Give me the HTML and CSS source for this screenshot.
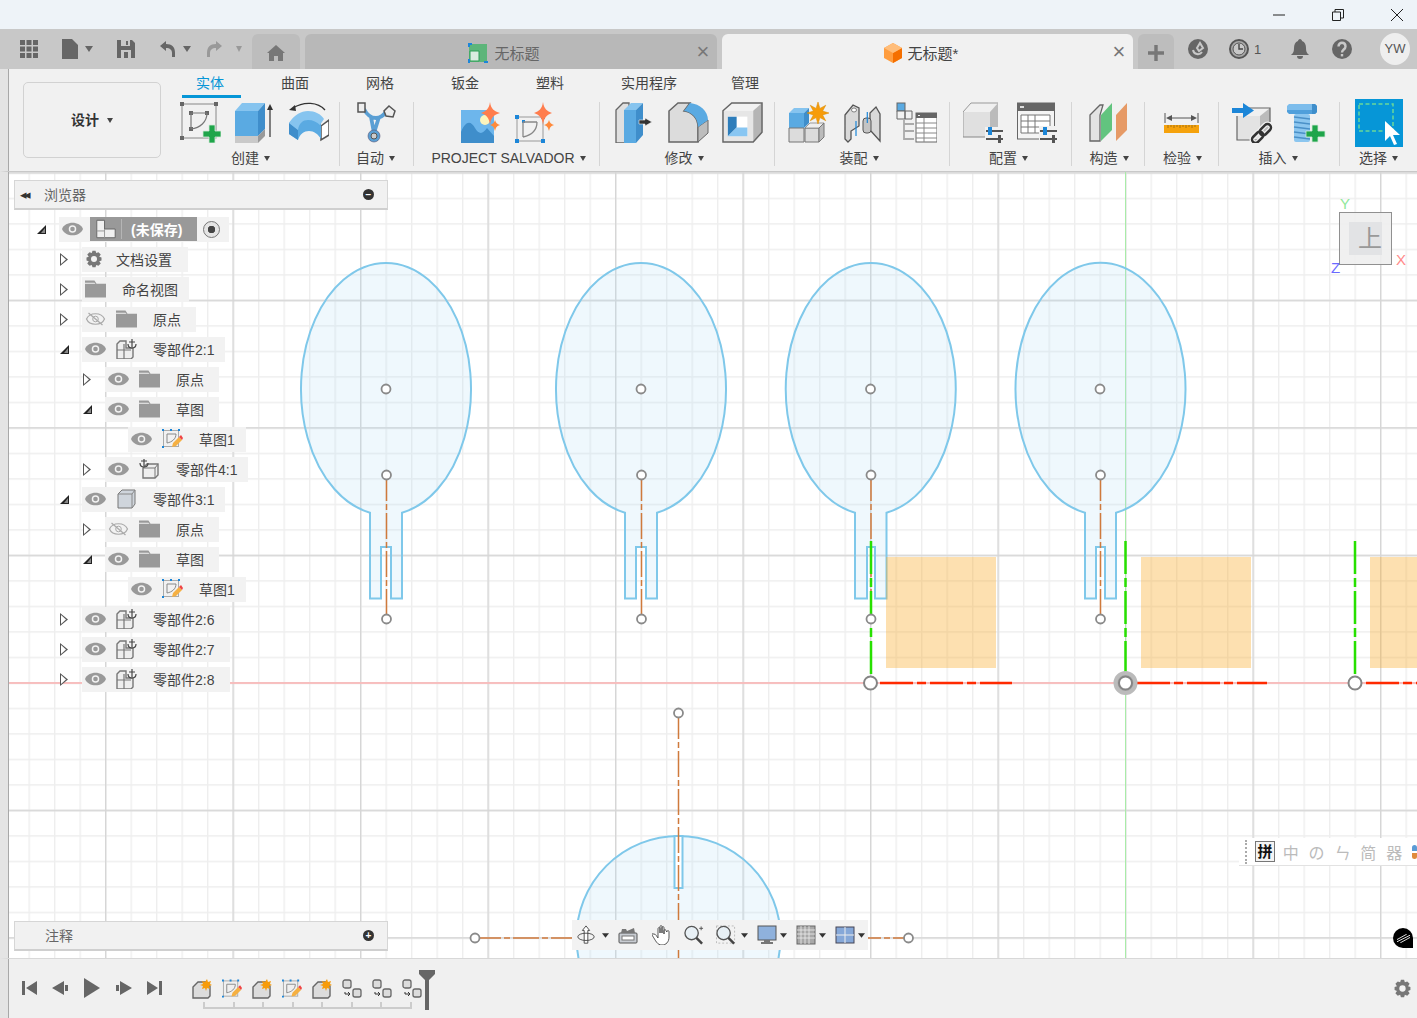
FILE: index.html
```html
<!DOCTYPE html>
<html lang="zh">
<head>
  <meta charset="UTF-8" />
  <title>Fusion</title>
  <link rel="stylesheet" href="styles.css">
</head>
<body>

<svg class="defs" aria-hidden="true">
  <symbol id="i-sketch-new" viewBox="0 0 41 41">
    <rect x="2" y="2" width="34" height="34" fill="none" stroke="#888"/>
    <path d="M0 0h4v4H0zM34 0h4v4h-4zM0 34h4v4H0zM9 9h4v4H9zM25 9h4v4h-4zM9 25h4v4H9z" fill="#666"/>
    <path d="M11 11v16M11 11h16M27 11c0 9-7 15-16 16" fill="none" stroke="#777" stroke-width="1.2"/>
    <path d="M29 23h6v6h6v6h-6v6h-6v-6h-6v-6h6z" fill="#1fa54a" stroke="#d3ead9" stroke-width=".8"/>
  </symbol>
  <symbol id="i-extrude" viewBox="0 0 41 41">
    <path d="M1 9h23v25H1z" fill="#5aaae2"/>
    <path d="M1 9l7-8h23l-7 8z" fill="#86c4ef"/>
    <path d="M24 9l7-8v26l-7 7z" fill="#3f8ecb"/>
    <path d="M1 34h23v7H1z" fill="#c9c9c9"/>
    <path d="M24 34l7-7v7l-7 7z" fill="#999"/>
    <path d="M36 35V5" stroke="#333" stroke-width="1.2"/>
    <path d="M33 8l3-6 3 6z" fill="#333"/>
  </symbol>
  <symbol id="i-revolve" viewBox="0 0 41 41">
    <path d="M33 24l8-6v15l-8 5z" fill="#fff" stroke="#555" stroke-width="1.500"/>
    <path d="M1 21C7 15 14 13 20 13s10 2 13 6v18c-3-5-7-8-12-8s-9 3-11 9l-9-6z" fill="#5aaae2"/>
    <path d="M1 21l9 7v10l-9-6z" fill="#3f8ecb"/>
    <path d="M1 21C6 13 13 9 20 9s13 3 16 8l-4 6c-3-3-7-5-12-5s-9 3-10 10z" fill="#86c4ef"/>
    <path d="M5 6C16-1 30 0 37 8" fill="none" stroke="#333" stroke-width="1.300"/>
    <path d="M1 8l6-5 1 6z" fill="#333"/>
  </symbol>
  <symbol id="i-auto" viewBox="0 0 41 41">
    <path d="M8 7c3 6 8 9 12 9s7-2 10-6M15 15l3 16M23 15l-5 16" fill="none" stroke="#5a9fd4" stroke-width="3.800"/>
    <rect x="2" y="1" width="7" height="9" fill="#eee" stroke="#555" stroke-width="1.500"/>
    <path d="M33 4l6 5-2 6-7-1-2-5z" fill="#eee" stroke="#555" stroke-width="1.500"/>
    <circle cx="18" cy="34" r="6" fill="#5a9fd4" stroke="#557" stroke-width=".6"/>
    <circle cx="18" cy="34" r="3" fill="#ccc" stroke="#555"/>
  </symbol>
  <symbol id="i-salvador" viewBox="0 0 41 41">
    <rect x="0" y="8" width="33" height="33" fill="#6db6ec"/>
    <path d="M0 30c5-12 10-11 14-4s8 6 12 0l7 8v7H0z" fill="#3f8ecb"/>
    <circle cx="24" cy="18" r="5" fill="#fdf4bd"/>
    <path d="M29 0c1 7 4 9 10 11-6 2-9 4-10 12-1-8-4-10-9-12 5-2 8-4 9-11z" fill="#ff7d4e"/>
    <path d="M34 18c1 3 2 4 5 5-3 1-4 2-5 6-1-4-2-5-5-6 3-1 4-2 5-5z" fill="#ff8a3c"/>
  </symbol>
  <symbol id="i-salvador-sketch" viewBox="0 0 41 41">
    <rect x="2" y="15" width="26" height="24" fill="none" stroke="#999"/>
    <path d="M0 13h4v4H0zM7 18h3v3H7zM26 13h4v4h-4zM0 37h4v4H0zM26 37h4v4h-4z" fill="#1c86d8"/>
    <path d="M8 20v15M8 20h14M22 20c0 8-5 13-14 15" fill="none" stroke="#888" stroke-width="1.300"/>
    <path d="M28 0c1 7 4 9 9 11-5 2-8 4-9 12-1-8-4-10-9-12 5-2 8-4 9-11z" fill="#ff7d4e"/>
    <path d="M34 18c1 3 2 4 5 5-3 1-4 2-5 6-1-4-2-5-5-6 3-1 4-2 5-5z" fill="#ff8a3c"/>
  </symbol>
  <symbol id="i-press" viewBox="0 0 41 41">
    <path d="M2 8l7-7h6v40H2z" fill="#e0e0e0" stroke="#666" stroke-width="1.300"/>
    <path d="M10 8h12v33H10z" fill="#5aaae2"/>
    <path d="M10 8l7-7h12l-7 7z" fill="#86c4ef"/>
    <path d="M22 8l7-7v32l-7 8z" fill="#3f8ecb"/>
    <path d="M25 18h6v-2l7 4-7 4v-2h-6z" fill="#333" stroke="#f4f4f4" stroke-width=".6"/>
  </symbol>
  <symbol id="i-fillet" viewBox="0 0 41 41">
    <path d="M1 9L10 1h12L16 9c8 1 14 7 14 16v15H1z" fill="#dcdcdc" stroke="#666" stroke-width="1.500"/>
    <path d="M30 25l10-7v13L30 40z" fill="#bdbdbd" stroke="#666"/>
    <path d="M16 9l6-8c10 1 18 8 18 17l-10 7c0-9-6-15-14-16z" fill="#5aaae2"/>
  </symbol>
  <symbol id="i-shell" viewBox="0 0 42 42">
    <path d="M1 9h31v32H1z" fill="#e6e6e6"/>
    <path d="M1 9l9-8h31l-9 8z" fill="#f2f2f2"/>
    <path d="M32 9l9-8v30l-9 10z" fill="#b5b5b5"/>
    <path d="M1 9l9-8h31v30l-9 10H1z" fill="none" stroke="#666" stroke-width="1.500"/>
    <path d="M6 15h20v20H6z" fill="#fff"/>
    <path d="M6 15h9v11l-9 9z" fill="#2d7dbb"/>
    <path d="M15 26h11v9H6z" fill="#88c6f2"/>
  </symbol>
  <symbol id="i-component" viewBox="0 0 41 41">
    <path d="M1 11h15v15H1z" fill="#5aaae2"/>
    <path d="M1 11l5-5h15l-5 5z" fill="#86c4ef"/>
    <path d="M16 11l5-5v15l-5 5z" fill="#3f8ecb"/>
    <path d="M1 26h15v14H1zM17 26h14v14H17z" fill="#dcdcdc" stroke="#777"/>
    <path d="M17 26l5-5h14l-5 5z" fill="#eee" stroke="#777" stroke-width=".7"/>
    <path d="M31 26l5-5v14l-5 5z" fill="#bbb" stroke="#777"/>
    <polygon points="30,0 31.900,6.400 37.800,3.200 34.600,9.100 41,11 34.600,12.900 37.800,18.800 31.900,15.600 30,22 28.100,15.600 22.200,18.800 25.400,12.900 19,11 25.400,9.100 22.200,3.200 28.100,6.400" fill="#f79c0a" stroke="#d98a00" stroke-width=".5"/>
  </symbol>
  <symbol id="i-joint" viewBox="0 0 39 41">
    <path d="M2 13l8-10 6 3v18L8 29v8l-3 3-3-3z" fill="#d9d9d9" stroke="#555" stroke-width="1.300"/>
    <path d="M27 11l6-6 4 7v27L27 28z" fill="#d9d9d9" stroke="#555" stroke-width="1.300"/>
    <rect x="20" y="16" width="8" height="15" rx="3" fill="#c4c4c4" stroke="#555"/>
    <path d="M24.300 10v11M13 19v15" stroke="#1c86d8" stroke-width="1.200"/>
    <ellipse cx="11" cy="8" rx="2.500" ry="2" fill="#fff" stroke="#666" stroke-width=".8"/>
  </symbol>
  <symbol id="i-tree-table" viewBox="0 0 41 41">
    <rect x="1" y="1" width="8" height="8" fill="#5aaae2" stroke="#666"/>
    <path d="M1 9h8v8H1zM9 9h7v8H9z" fill="#f2f2f2" stroke="#666"/>
    <path d="M8 17v21M8 22h10M8 29h10M8 37h10" stroke="#aaa" fill="none" stroke-width="1.800"/>
    <rect x="20" y="11" width="21" height="29" fill="#fff" stroke="#666"/>
    <path d="M20 11h21v5H20z" fill="#666"/>
    <path d="M22 13h2v1h-2z" fill="#eee"/>
    <path d="M20 21h21M20 26h21M20 31h21M20 36h21M28 16v24" stroke="#888"/>
  </symbol>
  <symbol id="i-config" viewBox="0 0 41 41">
    <path d="M0 10h27v25H0z" fill="#e0e0e0"/>
    <path d="M0 10l8-9h27l-8 9z" fill="#f0f0f0"/>
    <path d="M27 10l8-9v24l-8 10z" fill="#bbb"/>
    <path d="M0 35V10l8-9h27" fill="none" stroke="#999"/>
    <path d="M0 35h23" stroke="#888"/>
    <path d="M22 25h19v16H22z" fill="#f1f1f1"/>
    <path d="M23 29h17M23 37h17" stroke="#555" stroke-width="2"/>
    <path d="M25 25h4v8h-4z" fill="#1c86d8"/>
    <path d="M35 33h3v8h-3z" fill="#555"/>
  </symbol>
  <symbol id="i-config-table" viewBox="0 0 41 41">
    <rect x=".5" y="1" width="37" height="36" fill="#f4f4f4" stroke="#666"/>
    <path d="M0 1h38v8H0z" fill="#666"/>
    <path d="M3 4h4v2H3z" fill="#ddd"/>
    <path d="M4 13h29v18H4zM4 19h29M4 25h29M11 13v18M18 13v18" fill="#fff" stroke="#777"/>
    <path d="M22 24h19v17H22z" fill="#f1f1f1"/>
    <path d="M23 29h17M23 37h17" stroke="#555" stroke-width="2"/>
    <path d="M26 25h4v8h-4z" fill="#1c86d8"/>
    <path d="M35 33h3v8h-3z" fill="#555"/>
  </symbol>
  <symbol id="i-construct" viewBox="0 0 41 41">
    <path d="M2 13L12 3h3L12 13v26H2z" fill="#e3e3e3" stroke="#666" stroke-width="1.300"/>
    <path d="M13 13L24 1v27L13 39z" fill="#62c47f"/>
    <path d="M28 13L39 1v27L28 39z" fill="#e69a66"/>
  </symbol>
  <symbol id="i-measure" viewBox="0 0 37 41">
    <path d="M2 11v10M35 11v10" stroke="#555"/>
    <path d="M6 16h25" stroke="#555"/>
    <path d="M3 16l6-3v6zM34 16l-6-3v6z" fill="#555"/>
    <rect x="1" y="23" width="35" height="8" fill="#f5a20c"/>
    <path d="M5 23v3M8 23v2M11 23v3M14 23v2M17 23v3M20 23v2M23 23v3M26 23v2M29 23v3M32 23v2" stroke="#a87310"/>
  </symbol>
  <symbol id="i-insert" viewBox="0 0 41 41">
    <path d="M5 14h23v24H5z" fill="#e3e3e3"/>
    <path d="M5 14l8-8h25l-10 8z" fill="#f0f0f0"/>
    <path d="M28 14l10-8v23l-10 9z" fill="#bbb"/>
    <path d="M5 14v24h23M13 6h25v14" fill="none" stroke="#666" stroke-width="1.200"/>
    <path d="M0 6h11V1l11 7.500L11 16v-5H0z" fill="#1c86d8"/>
    <g fill="none" stroke="#f1f1f1" stroke-width="5">
      <rect x="-7" y="-3.500" width="13" height="7" rx="3.500" transform="translate(26 35) rotate(-45)"/>
      <rect x="-6" y="-3.500" width="13" height="7" rx="3.500" transform="translate(33 28) rotate(-45)"/>
    </g>
    <g fill="none" stroke="#333" stroke-width="2.500">
      <rect x="-7" y="-3.500" width="13" height="7" rx="3.500" transform="translate(26 35) rotate(-45)"/>
      <rect x="-6" y="-3.500" width="13" height="7" rx="3.500" transform="translate(33 28) rotate(-45)"/>
    </g>
  </symbol>
  <symbol id="i-bolt" viewBox="0 0 41 41">
    <rect x="8" y="12" width="16" height="28" rx="2" fill="#8cc6ef"/>
    <path d="M8 15l16 2M8 20l16 2M8 25l16 2M8 30l16 2M8 35l16 2" stroke="#4a90c8" stroke-width="1.300"/>
    <path d="M1 4l2-2h26l2 2v4H1z" fill="#7dbdec"/>
    <path d="M1 8h30v2l-2 2H3l-2-2z" fill="#4f9fdb"/>
    <path d="M26 2h3l2 2v6l-2 2h-3z" fill="#3f8ecb"/>
    <path d="M26 23h6v6h7v6h-7v5h-6v-5h-6v-6h6z" fill="#1fa54a" stroke="#d3ead9" stroke-width=".8"/>
  </symbol>
  <symbol id="i-select" viewBox="0 0 48 48">
    <rect width="48" height="48" fill="#0696d7"/>
    <rect x="4" y="5" width="34" height="27" fill="none" stroke="#69d89a" stroke-width="1.500" stroke-dasharray="4 2.500"/>
    <path d="M30 22v20l5-5 4 9 3-1-4-9h7z" fill="#fff"/>
  </symbol>

  <symbol id="i-eye" viewBox="0 0 20 12">
    <path d="M0 6c3-8 17-8 20 0-3 8-17 8-20 0z" fill="#999"/>
    <circle cx="10" cy="6" r="3.600" fill="#f2f2f2"/>
    <circle cx="10" cy="6" r="2.200" fill="#999"/>
  </symbol>
  <symbol id="i-eye-off" viewBox="0 0 20 14">
    <path d="M1 7c3-7 15-7 18 0-3 7-15 7-18 0z" fill="none" stroke="#aaa" stroke-width="1.200"/>
    <circle cx="10" cy="7" r="2.800" fill="none" stroke="#aaa"/>
    <path d="M3 1l14 12" stroke="#aaa" stroke-width="1.200"/>
  </symbol>
  <symbol id="i-folder" viewBox="0 0 20 16">
    <path d="M0 0h9l2 3h9v13H0z" fill="#999"/>
    <path d="M0 2h9l1 1H0z" fill="#f2f2f2"/>
  </symbol>
  <symbol id="i-gear" viewBox="0 0 24 24">
    <path d="M10 1h4l1 3 3-1 3 3-2 3 3 1v4l-3 1 2 3-3 3-3-1-1 3h-4l-1-3-3 1-3-3 2-3-3-1v-4l3-1-2-3 3-3 3 1z" fill="#777"/>
    <circle cx="12" cy="12" r="4" fill="#f2f2f2"/>
  </symbol>
  <symbol id="i-comp" viewBox="0 0 21 20">
    <path d="M1 5l3-3h6v7h7v9l-2 2H1z" fill="#eee" stroke="#777" stroke-width="1.400"/>
    <path d="M1 11h14M8 5v15" stroke="#777" stroke-width="1.200"/>
    <path d="M16 0v8M13 3h6M12 5c0 3 2 4 4 4s4-1 4-4" fill="none" stroke="#444" stroke-width="1.200"/>
  </symbol>
  <symbol id="i-comp-box" viewBox="0 0 21 20">
    <path d="M4 9l4-4h11v11l-3 3H4z" fill="#eee" stroke="#777" stroke-width="1.400"/>
    <path d="M4 9h12v10M16 9l3-4" fill="none" stroke="#777"/>
    <path d="M5 0v7M2 2h6M1 4c0 3 2 4 4 4s4-1 4-4" fill="none" stroke="#444" stroke-width="1.200"/>
  </symbol>
  <symbol id="i-box" viewBox="0 0 21 20">
    <path d="M2 5l4-4h13v14l-3 4H2z" fill="#cfd5dc" stroke="#777"/>
    <path d="M2 5h14v14M16 5l3-4" fill="none" stroke="#888"/>
  </symbol>
  <symbol id="i-sketch" viewBox="0 0 21 20">
    <rect x="1.500" y="1.500" width="15" height="16" fill="none" stroke="#aaa"/>
    <path d="M0 0h2v2H0zM16 0h2v2h-2zM0 17h2v2H0zM8 0h2v2H8z" fill="#1c86d8"/>
    <path d="M5 5v9M5 5h9M14 5c0 5-4 8-9 9" fill="none" stroke="#888"/>
    <path d="M10 18l1-4 6-6 3 3-6 6z" fill="#f5b042"/>
    <path d="M17 8l2-2 2 3-1 2z" fill="#ef4444"/>
  </symbol>
  <symbol id="i-root" viewBox="0 0 32 20">
    <path d="M7 1h8v9h11v9H7z" fill="#f0f0f0" stroke="#666"/>
    <path d="M15 10v9M7 12h8" stroke="#999"/>
  </symbol>
  <symbol id="i-f-box" viewBox="0 0 20 20">
    <path d="M1 8l5-5h8l4 4v10l-2 2H1z" fill="#dcdcdc" stroke="#666" stroke-width="1.400"/>
    <path d="M15 0l1 3 3-1-1 3 2 1-3 1 1 3-3-1-1 3-1-3-3 1 1-3-3-1 3-1-1-3 3 1z" fill="#f79c0a"/>
  </symbol>
  <symbol id="i-f-joint" viewBox="0 0 20 20">
    <rect x="1" y="1" width="8" height="8" rx="2" fill="#dcdcdc" stroke="#666" stroke-width="1.300"/>
    <rect x="11" y="10" width="8" height="8" rx="2" fill="#dcdcdc" stroke="#666" stroke-width="1.300"/>
    <path d="M3 13v2h5M6 13l2 2-2 2" fill="none" stroke="#333"/>
  </symbol>
  <symbol id="i-orbit" viewBox="0 0 20 22">
    <path d="M10 1l4 5h-2v14H8V6H6z" fill="#fff" stroke="#444"/>
    <ellipse cx="10" cy="13" rx="9" ry="4" fill="none" stroke="#444"/>
  </symbol>
  <symbol id="i-look" viewBox="0 0 20 18">
    <rect x="1" y="7" width="18" height="10" rx="1" fill="#c8ccd2" stroke="#555"/>
    <rect x="4" y="10" width="12" height="4" fill="#fff" stroke="#777"/>
    <path d="M3 7l1-4h4l1 2 7-3 1 5z" fill="#777"/>
  </symbol>
  <symbol id="i-hand" viewBox="0 0 20 20">
    <path d="M2 9c2 0 3 3 4 4V4c0-2 2-2 2 0v4-6c0-2 2-2 2 0v6-5c0-2 2-2 2 0v6-3c0-2 2-2 2 0l1 1c0-2 2-2 2 0v5c0 5-3 8-7 8-5 0-6-4-10-10-1-1 0-2 0-1z" fill="#fff" stroke="#444" stroke-width=".9"/>
  </symbol>
  <symbol id="i-zoom" viewBox="0 0 21 20">
    <circle cx="8" cy="8" r="7" fill="#e8f0f5" stroke="#555" stroke-width="1.400"/>
    <path d="M13 13l6 6" stroke="#444" stroke-width="2.600"/>
    <path d="M16 3h4M18 1v4" stroke="#555"/>
  </symbol>
  <symbol id="i-fit" viewBox="0 0 21 20">
    <rect x=".5" y=".5" width="19" height="18" fill="none" stroke="#bbb" stroke-dasharray="2 2"/>
    <circle cx="8" cy="8" r="7" fill="#e8f0f5" stroke="#555" stroke-width="1.400"/>
    <path d="M13 13l6 6" stroke="#444" stroke-width="2.600"/>
  </symbol>
  <symbol id="i-display" viewBox="0 0 20 20">
    <rect x="1" y="1" width="18" height="14" fill="#8fb1dc" stroke="#555"/>
    <path d="M7 15h6v2H7zM4 17h12v2H4z" fill="#777"/>
  </symbol>
  <symbol id="i-gridbox" viewBox="0 0 20 20">
    <rect x="1" y="1" width="18" height="18" fill="#a8a8a8" stroke="#666"/>
    <path d="M1 5h18M1 9h18M1 13h18M5 1v18M9 1v18M13 1v18" stroke="#eee" stroke-width=".8"/>
  </symbol>
  <symbol id="i-views" viewBox="0 0 20 18">
    <rect x="1" y="1" width="18" height="16" fill="#86a8d8" stroke="#445"/>
    <path d="M1 9h18M10 1v16" stroke="#eee"/>
  </symbol>
  <symbol id="i-cam-caret" viewBox="0 0 8 5"><path d="M0 0h8L4 5z" fill="#333"/></symbol>
</svg>

<header class="titlebar">
  <svg class="win-btn" viewBox="0 0 12 12"><path d="M0 6h12" stroke="#222"/></svg>
  <svg class="win-btn" viewBox="0 0 12 12"><path d="M.5 3h8v8.500h-8zM3 3V.5h8.500V9H9" fill="none" stroke="#222"/></svg>
  <svg class="win-btn" viewBox="0 0 12 12"><path d="M0 0l12 12M12 0L0 12" stroke="#222"/></svg>
</header>

<div class="tabbar">
  <div class="qat">
    <svg class="qat-apps" viewBox="0 0 18 18"><path d="M0 0h5v5H0zM6.500 0h5v5h-5zM13 0h5v5h-5zM0 6.500h5v5H0zM6.500 6.500h5v5h-5zM13 6.500h5v5h-5zM0 13h5v5H0zM6.500 13h5v5h-5zM13 13h5v5h-5z" fill="#666"/></svg>
    <svg class="qat-file" viewBox="0 0 16 20"><path d="M0 0h10l6 6v14H0z" fill="#666"/></svg>
    <span class="caret"></span>
    <svg class="qat-save" viewBox="0 0 18 18"><path d="M0 0h15l3 3v15H0z" fill="#666"/><path d="M4 0h9v6H4zM4 10h10v8H4z" fill="#c8c8c8"/><path d="M9 1h2v4H9zM7 12h4v6H7z" fill="#666"/></svg>
    <svg class="qat-undo" viewBox="0 0 16 18"><path d="M1 6l6-5v3c6 0 9 3 9 9v4h-3v-4c0-3-2-5-6-5v3z" fill="#666"/></svg>
    <span class="caret"></span>
    <svg class="qat-redo" viewBox="0 0 16 18"><path d="M15 6L9 1v3C3 4 0 7 0 13v4h3v-4c0-3 2-5 6-5v3z" fill="#999"/></svg>
    <span class="caret faded"></span>
  </div>
  <div class="tab tab-home">
    <svg class="home-ico" viewBox="0 0 18 16"><path d="M9 0l9 8h-2v8h-5v-5H7v5H2V8H0z" fill="#777"/></svg>
  </div>
  <div class="tab tab-off">
    <svg class="tab-ico" viewBox="0 0 20 20"><rect x="1" y="1" width="18" height="18" fill="#5db57a"/><path d="M2 8h9v10H2z" fill="#d9ecdf" stroke="#2f9e57"/><path d="M0 0h4v2H2v2H0zM16 18h4v2h-4zM0 16h2v4H0z" fill="#1c86d8"/></svg>
    <span class="tab-title">无标题</span>
    <span class="tab-x">×</span>
  </div>
  <div class="tab tab-on">
    <svg class="tab-ico cube" viewBox="0 0 18 20"><path d="M9 0l9 5v10l-9 5-9-5V5z" fill="#ff9d3f"/><path d="M9 10l9-5v10l-9 5z" fill="#f56f00"/><path d="M9 0l9 5-9 5-9-5z" fill="#ffbd7a"/></svg>
    <span class="tab-title">无标题*</span>
    <span class="tab-x">×</span>
  </div>
  <div class="tab tab-plus"><svg class="plus-ico" viewBox="0 0 14 14"><path d="M5.500 0h3v5.500H14v3H8.500V14h-3V8.500H0v-3h5.500z" fill="#777"/></svg></div>
  <div class="tray">
    <svg class="tray-refresh" viewBox="0 0 20 20"><circle cx="10" cy="10" r="10" fill="#666"/><path d="M5 11a5 5 0 0 0 9 2M15 9l-3-5-3 5 2 3z" fill="none" stroke="#c8c8c8" stroke-width="2"/></svg>
    <svg class="tray-clock" viewBox="0 0 20 20"><circle cx="10" cy="10" r="9" fill="#aaa" stroke="#555" stroke-width="2"/><circle cx="10" cy="10" r="6" fill="#c8c8c8" stroke="#555"/><path d="M10 5v5h4" fill="none" stroke="#444" stroke-width="1.400"/></svg>
    <span class="tray-count">1</span>
    <svg class="tray-bell" viewBox="0 0 18 20"><path d="M9 0c1 0 2 1 2 2 3 1 4 4 4 7 0 4 1 5 3 7H0c2-2 3-3 3-7 0-3 1-6 4-7 0-1 1-2 2-2zM6 17h6c0 2-1 3-3 3s-3-1-3-3z" fill="#666"/></svg>
    <svg class="tray-help" viewBox="0 0 20 20"><circle cx="10" cy="10" r="10" fill="#666"/><path d="M6.500 7.500c0-5 7-5 7 0 0 3-3.500 3-3.500 6" fill="none" stroke="#c8c8c8" stroke-width="2.400"/><path d="M8.800 15h2.400v2.400H8.800z" fill="#c8c8c8"/></svg>
    <span class="avatar">YW</span>
  </div>
</div>

<div class="ribbon">
  <div class="design-box">设计<span class="caret small"></span></div>
  <div class="ribbon-main">
    <nav class="rtabs">
      <a class="rtab active">实体</a>
      <a class="rtab">曲面</a>
      <a class="rtab">网格</a>
      <a class="rtab">钣金</a>
      <a class="rtab">塑料</a>
      <a class="rtab">实用程序</a>
      <a class="rtab">管理</a>
    </nav>
    <div class="rgroups">
      <section class="rg g-create">
        <div class="rg-icons">
          <svg class="ti"><use href="#i-sketch-new"/></svg>
          <svg class="ti"><use href="#i-extrude"/></svg>
          <svg class="ti"><use href="#i-revolve"/></svg>
        </div>
        <div class="rg-label">创建<span class="caret small"></span></div>
      </section>
      <section class="rg g-auto">
        <div class="rg-icons"><svg class="ti"><use href="#i-auto"/></svg></div>
        <div class="rg-label">自动<span class="caret small"></span></div>
      </section>
      <section class="rg g-salv">
        <div class="rg-icons">
          <svg class="ti"><use href="#i-salvador"/></svg>
          <svg class="ti"><use href="#i-salvador-sketch"/></svg>
        </div>
        <div class="rg-label">PROJECT SALVADOR<span class="caret small"></span></div>
      </section>
      <section class="rg g-modify">
        <div class="rg-icons">
          <svg class="ti"><use href="#i-press"/></svg>
          <svg class="ti"><use href="#i-fillet"/></svg>
          <svg class="ti"><use href="#i-shell"/></svg>
        </div>
        <div class="rg-label">修改<span class="caret small"></span></div>
      </section>
      <section class="rg g-assem">
        <div class="rg-icons">
          <svg class="ti"><use href="#i-component"/></svg>
          <svg class="ti"><use href="#i-joint"/></svg>
          <svg class="ti"><use href="#i-tree-table"/></svg>
        </div>
        <div class="rg-label">装配<span class="caret small"></span></div>
      </section>
      <section class="rg g-config">
        <div class="rg-icons">
          <svg class="ti"><use href="#i-config"/></svg>
          <svg class="ti"><use href="#i-config-table"/></svg>
        </div>
        <div class="rg-label">配置<span class="caret small"></span></div>
      </section>
      <section class="rg g-const">
        <div class="rg-icons"><svg class="ti"><use href="#i-construct"/></svg></div>
        <div class="rg-label">构造<span class="caret small"></span></div>
      </section>
      <section class="rg g-inspect">
        <div class="rg-icons"><svg class="ti"><use href="#i-measure"/></svg></div>
        <div class="rg-label">检验<span class="caret small"></span></div>
      </section>
      <section class="rg g-insert">
        <div class="rg-icons">
          <svg class="ti"><use href="#i-insert"/></svg>
          <svg class="ti"><use href="#i-bolt"/></svg>
        </div>
        <div class="rg-label">插入<span class="caret small"></span></div>
      </section>
      <section class="rg g-select">
        <div class="rg-icons"><svg class="ti-select"><use href="#i-select"/></svg></div>
        <div class="rg-label">选择<span class="caret small"></span></div>
      </section>
    </div>
  </div>
</div>

<div class="main">
  <div class="rail"></div>
  <div class="workspace">

    <svg class="canvas" viewBox="9 172 1408 786" preserveAspectRatio="none">
      <defs>
        <pattern id="grid-minor" patternUnits="userSpaceOnUse" x="3" y="172.200" width="25.500" height="25.500">
          <path d="M0 0h25.500v1.400H0zM0 0h1.400v25.500H0z" fill="#eeeeee"/>
        </pattern>
        <pattern id="grid-major" patternUnits="userSpaceOnUse" x="105" y="172.200" width="127.500" height="127.500">
          <path d="M0 0h127.500v1.400H0zM0 0h1.400v127.500H0z" fill="#d6d6d6"/>
        </pattern>
      </defs>
      <rect x="9" y="172" width="1408" height="786" fill="#fff"/>
      <rect x="9" y="172" width="1408" height="786" fill="url(#grid-minor)"/>
      <rect x="9" y="172" width="1408" height="786" fill="url(#grid-major)"/>

      <path d="M9 683h1408" stroke="#ffb4b4" stroke-width="1.500"/>
      <path d="M1125.500 172v786" stroke="#a8eca8"/>

      <!-- bodies -->
      <g class="body">
        <path d="M370 512.700A85 126 0 1 1 402 512.700V598.500H391V547H381V598.500H370Z"/>
        <path d="M625 512.700A85 126 0 1 1 657 512.700V598.500H646V547H636V598.500H625Z"/>
        <path d="M855 512.700A85 126 0 1 1 886.500 512.700V598.500H875V547H867V598.500H855Z"/>
        <path d="M1085 512.700A85 126 0 1 1 1116 512.700V598.500H1105V547H1096V598.500H1085Z"/>
        <circle cx="678.500" cy="938" r="102"/>
        <path class="slot" d="M674.500 836H682.500V888H674.500Z"/>
      </g>

      <g class="profile">
        <rect x="886" y="557" width="110" height="111"/>
        <rect x="1141" y="557" width="110" height="111"/>
        <rect x="1370" y="557" width="60" height="111"/>
      </g>

      <g class="centerline">
        <path d="M386.500 475V619"/>
        <path d="M641.500 475V619"/>
        <path d="M871 475V619"/>
        <path d="M1100.500 475V619"/>
        <path d="M678.500 713V958"/>
        <path d="M475 938H908"/>
      </g>

      <g class="axis-y">
        <path d="M871 541V676"/>
        <path d="M1125.500 541V672"/>
        <path d="M1355 541V676"/>
      </g>
      <g class="axis-x">
        <path d="M880 683H1012"/>
        <path d="M1137 683H1267"/>
        <path d="M1366 683H1417"/>
      </g>

      <g class="pt">
        <circle cx="386" cy="389" r="4.500"/><circle cx="386.500" cy="475" r="4.500"/><circle cx="386.500" cy="619" r="4.500"/>
        <circle cx="641" cy="389" r="4.500"/><circle cx="641.500" cy="475" r="4.500"/><circle cx="641.500" cy="619" r="4.500"/>
        <circle cx="870.500" cy="389" r="4.500"/><circle cx="871" cy="475" r="4.500"/><circle cx="871" cy="619" r="4.500"/>
        <circle cx="1100" cy="389" r="4.500"/><circle cx="1100.500" cy="475" r="4.500"/><circle cx="1100.500" cy="619" r="4.500"/>
        <circle cx="678.500" cy="713" r="4.500"/><circle cx="475" cy="938" r="4.500"/><circle cx="908.500" cy="938" r="4.500"/>
      </g>
      <circle class="halo" cx="1125.500" cy="683" r="10"/>
      <g class="origin">
        <circle cx="870.500" cy="683" r="6.500"/>
        <circle cx="1125.500" cy="683" r="6.500"/>
        <circle cx="1355" cy="683" r="6.500"/>
      </g>
    </svg>

    <aside class="browser">
      <div class="panel-head">
        <span class="rewind">◂◂</span>
        <span class="panel-title">浏览器</span>
        <span class="round-btn">−</span>
      </div>
      <ul class="tree">
        <li class="row l0">
          <span class="arrow open"></span>
          <div class="pill root">
            <svg class="eye"><use href="#i-eye"/></svg>
            <div class="root-box">
              <svg class="root-ico"><use href="#i-root"/></svg>
              <span class="root-name">(未保存)</span>
            </div>
            <span class="radio"></span>
          </div>
        </li>
        <li class="row l1">
          <span class="arrow"></span>
          <div class="pill wide"><svg class="gear"><use href="#i-gear"/></svg><span class="label tight">文档设置</span></div>
        </li>
        <li class="row l1">
          <span class="arrow"></span>
          <div class="pill"><svg class="ic"><use href="#i-folder"/></svg><span class="label">命名视图</span></div>
        </li>
        <li class="row l1">
          <span class="arrow"></span>
          <div class="pill mid"><svg class="eye"><use href="#i-eye-off"/></svg><svg class="ic"><use href="#i-folder"/></svg><span class="label">原点</span></div>
        </li>
        <li class="row l1">
          <span class="arrow open"></span>
          <div class="pill"><svg class="eye"><use href="#i-eye"/></svg><svg class="ic"><use href="#i-comp"/></svg><span class="label">零部件2:1</span></div>
        </li>
        <li class="row l2">
          <span class="arrow"></span>
          <div class="pill mid"><svg class="eye"><use href="#i-eye"/></svg><svg class="ic"><use href="#i-folder"/></svg><span class="label">原点</span></div>
        </li>
        <li class="row l2">
          <span class="arrow open"></span>
          <div class="pill mid"><svg class="eye"><use href="#i-eye"/></svg><svg class="ic"><use href="#i-folder"/></svg><span class="label">草图</span></div>
        </li>
        <li class="row l3">
          <span class="arrow none"></span>
          <div class="pill"><svg class="eye"><use href="#i-eye"/></svg><svg class="ic"><use href="#i-sketch"/></svg><span class="label">草图1</span></div>
        </li>
        <li class="row l2">
          <span class="arrow"></span>
          <div class="pill"><svg class="eye"><use href="#i-eye"/></svg><svg class="ic"><use href="#i-comp-box"/></svg><span class="label">零部件4:1</span></div>
        </li>
        <li class="row l1">
          <span class="arrow open"></span>
          <div class="pill"><svg class="eye"><use href="#i-eye"/></svg><svg class="ic"><use href="#i-box"/></svg><span class="label">零部件3:1</span></div>
        </li>
        <li class="row l2">
          <span class="arrow"></span>
          <div class="pill mid"><svg class="eye"><use href="#i-eye-off"/></svg><svg class="ic"><use href="#i-folder"/></svg><span class="label">原点</span></div>
        </li>
        <li class="row l2">
          <span class="arrow open"></span>
          <div class="pill mid"><svg class="eye"><use href="#i-eye"/></svg><svg class="ic"><use href="#i-folder"/></svg><span class="label">草图</span></div>
        </li>
        <li class="row l3">
          <span class="arrow none"></span>
          <div class="pill"><svg class="eye"><use href="#i-eye"/></svg><svg class="ic"><use href="#i-sketch"/></svg><span class="label">草图1</span></div>
        </li>
        <li class="row l1">
          <span class="arrow"></span>
          <div class="pill wide"><svg class="eye"><use href="#i-eye"/></svg><svg class="ic"><use href="#i-comp"/></svg><span class="label">零部件2:6</span></div>
        </li>
        <li class="row l1">
          <span class="arrow"></span>
          <div class="pill wide"><svg class="eye"><use href="#i-eye"/></svg><svg class="ic"><use href="#i-comp"/></svg><span class="label">零部件2:7</span></div>
        </li>
        <li class="row l1">
          <span class="arrow"></span>
          <div class="pill wide"><svg class="eye"><use href="#i-eye"/></svg><svg class="ic"><use href="#i-comp"/></svg><span class="label">零部件2:8</span></div>
        </li>
      </ul>
    </aside>

    <div class="comments">
      <span class="panel-title">注释</span>
      <span class="round-btn">+</span>
    </div>

    <div class="viewcube">
      <span class="vc-y">Y</span>
      <div class="vc-face"><span class="vc-inner">上</span></div>
      <span class="vc-x">X</span>
      <span class="vc-z">Z</span>
    </div>

    <div class="navbar">
      <div class="nav-group nav-orbit"><svg class="nav-ico"><use href="#i-orbit"/></svg><svg class="nav-caret"><use href="#i-cam-caret"/></svg></div>
      <svg class="nav-ico nav-cam"><use href="#i-look"/></svg>
      <svg class="nav-ico nav-hand"><use href="#i-hand"/></svg>
      <svg class="nav-ico nav-zoom"><use href="#i-zoom"/></svg>
      <div class="nav-group nav-fit"><svg class="nav-ico"><use href="#i-fit"/></svg><svg class="nav-caret"><use href="#i-cam-caret"/></svg></div>
      <div class="nav-group nav-next"><svg class="nav-ico"><use href="#i-display"/></svg><svg class="nav-caret"><use href="#i-cam-caret"/></svg></div>
      <div class="nav-group nav-next"><svg class="nav-ico"><use href="#i-gridbox"/></svg><svg class="nav-caret"><use href="#i-cam-caret"/></svg></div>
      <div class="nav-group nav-next"><svg class="nav-ico"><use href="#i-views"/></svg><svg class="nav-caret"><use href="#i-cam-caret"/></svg></div>
    </div>

    <div class="ime">
      <span class="ime-grip"></span>
      <span class="ime-mode">拼</span>
      <span class="ime-faint">中</span>
      <span class="ime-faint">の</span>
      <span class="ime-faint">ㄣ</span>
      <span class="ime-faint">简</span>
      <span class="ime-faint">器</span>
      <span class="ime-dots"></span>
    </div>

    <div class="badge">
      <svg viewBox="0 0 12 8"><path d="M0 7L12 1M0 5l9-5M3 8l9-5" stroke="#fff" stroke-width=".8"/></svg>
    </div>
  </div>
</div>

<footer class="timeline">
  <div class="tl-controls">
    <svg class="tl-btn" viewBox="0 0 15 16"><path d="M0 1h3v14H0zM15 1v14L4 8z" fill="#666"/></svg>
    <svg class="tl-btn prev" viewBox="0 0 17 16"><path d="M12 1v14L0 8zM13 5h3v6h-3z" fill="#666"/></svg>
    <svg class="tl-btn play" viewBox="0 0 16 20"><path d="M0 0l16 10L0 20z" fill="#666"/></svg>
    <svg class="tl-btn prev" viewBox="0 0 17 16"><path d="M5 1v14l12-7zM1 5h3v6H1z" fill="#666"/></svg>
    <svg class="tl-btn" viewBox="0 0 15 16"><path d="M12 1h3v14h-3zM0 1v14l11-7z" fill="#666"/></svg>
  </div>
  <div class="tl-track">
    <div class="tl-features">
      <svg class="tl-f"><use href="#i-f-box"/></svg>
      <svg class="tl-f"><use href="#i-sketch"/></svg>
      <svg class="tl-f"><use href="#i-f-box"/></svg>
      <svg class="tl-f"><use href="#i-sketch"/></svg>
      <svg class="tl-f"><use href="#i-f-box"/></svg>
      <svg class="tl-f"><use href="#i-f-joint"/></svg>
      <svg class="tl-f"><use href="#i-f-joint"/></svg>
      <svg class="tl-f"><use href="#i-f-joint"/></svg>
    </div>
    <div class="tl-bracket">
      <span></span><span></span><span></span><span></span><span></span><span></span><span></span><span></span>
    </div>
    <svg class="tl-marker" viewBox="0 0 16 40"><path d="M0 0h16v4l-6 6v30H6V10L0 4z" fill="#666"/></svg>
  </div>
  <svg class="tl-gear"><use href="#i-gear"/></svg>
</footer>

</body>
</html>
```

FILE: styles.css
```css
* {
  margin: 0;
  padding: 0;
  box-sizing: border-box;
}

html, body {
  width: 1417px;
  height: 1018px;
  overflow: hidden;
}

body {
  display: flex;
  flex-direction: column;
  font-family: "Liberation Sans", "Noto Sans CJK SC", sans-serif;
  font-size: 14px;
  color: #444;
  background: #f1f1f1;
}

.defs {
  position: absolute;
  width: 0;
  height: 0;
}

.caret {
  display: inline-block;
  width: 0;
  height: 0;
  border-left: 4.5px solid transparent;
  border-right: 4.5px solid transparent;
  border-top: 6px solid #666;
}
.caret.faded {
  border-top-color: #999;
  border-left-width: 3px;
  border-right-width: 3px;
}
.caret.small {
  border-left-width: 3px;
  border-right-width: 3px;
  border-top: 5px solid #444;
  margin-left: 5px;
  vertical-align: 2px;
}

/* title bar */
.titlebar {
  height: 29px;
  background: #eef3f8;
  display: flex;
  justify-content: flex-end;
  align-items: center;
  gap: 47px;
  padding-right: 14px;
}
.win-btn {
  width: 12px;
  height: 12px;
}

/* tab bar */
.tabbar {
  height: 40px;
  background: #c8c8c8;
  display: flex;
  align-items: flex-end;
}
.qat {
  width: 252px;
  height: 40px;
  display: flex;
  align-items: center;
  padding-left: 20px;
}
.qat-apps { width: 18px; height: 18px; margin-right: 24px; }
.qat-file { width: 16px; height: 20px; margin-right: 7px; }
.qat-save { width: 18px; height: 18px; margin-left: 24px; margin-right: 24px; }
.qat-undo { width: 16px; height: 18px; margin-right: 8px; }
.qat-redo { width: 16px; height: 18px; margin-left: 16px; margin-right: 13px; }

.tab {
  height: 35px;
  border-radius: 6px 6px 0 0;
  display: flex;
  align-items: center;
  position: relative;
}
.tab-home {
  width: 48px;
  background: #bdbdbd;
  justify-content: center;
  margin-right: 5px;
}
.home-ico { width: 18px; height: 16px; margin-top: 3px; }
.tab-off, .tab-on {
  width: 412px;
  justify-content: center;
  gap: 6px;
  padding-right: 14px;
}
.tab-off {
  background: #b8b8b8;
  margin-right: 5px;
  color: #666;
}
.tab-on {
  width: 411px;
  background: #f1f1f1;
  margin-right: 5px;
  color: #444;
  padding-right: 13px;
}
.tab-ico { width: 20px; height: 20px; margin-top: 2px; }
.tab-ico.cube { width: 18px; }
.tab-title { font-size: 15px; margin-top: 1px; }
.tab-x {
  position: absolute;
  right: 6px;
  top: 5px;
  font-size: 22px;
  line-height: 26px;
  color: #777;
  width: 16px;
  text-align: center;
}
.tab-plus {
  width: 36px;
  background: #bdbdbd;
  justify-content: center;
  margin-right: 14px;
}
.plus-ico { width: 16px; height: 16px; margin-top: 3px; }

.tray {
  height: 40px;
  flex: 1;
  display: flex;
  align-items: center;
}
.tray svg { flex: none; }
.tray-refresh { width: 20px; height: 20px; margin-right: 21px; }
.tray-clock { width: 20px; height: 20px; margin-right: 5px; }
.tray-count { color: #555; width: 6px; font-size: 13px; margin-right: 31px; }
.tray-bell { width: 18px; height: 20px; margin-right: 23px; }
.tray-help { width: 20px; height: 20px; margin-right: 28px; }
.avatar {
  width: 30px;
  height: 32px;
  border-radius: 50%;
  background: #eeeeee;
  font-size: 13px;
  line-height: 32px;
  text-align: center;
  color: #555;
}

/* ribbon */
.ribbon {
  height: 103px;
  display: flex;
  border-left: 8px solid #e4e4e4;
  border-bottom: 1px solid #c8c8c8;
  padding-left: 15px;
  background: #f1f1f1;
  box-shadow: inset 1px 0 #a8a8a8;
}
.design-box {
  width: 138px;
  height: 76px;
  margin-top: 13px;
  margin-right: 11px;
  border: 1px solid #d2d2d2;
  border-radius: 5px;
  text-align: center;
  line-height: 74px;
  color: #333;
  font-weight: bold;
}
.design-box .caret { margin-left: 8px; }
.ribbon-main {
  flex: 1;
  display: flex;
  flex-direction: column;
}
.rtabs {
  height: 33px;
  display: flex;
  gap: 26px;
  padding-left: 10px;
}
.rtab {
  height: 29px;
  padding: 0 17px 0 14px;
  line-height: 28px;
  color: #444;
  border-bottom: 3px solid transparent;
}
.rtab:last-child {
  margin-left: -3px;
}
.rtab.active {
  color: #0696d7;
  border-bottom-color: #0696d7;
}
.rgroups {
  display: flex;
  height: 64px;
}
.rg {
  display: flex;
  flex-direction: column;
  align-items: center;
  border-right: 1.5px solid #d5d5d5;
}
.g-create { width: 168px; }
.g-auto { width: 74px; }
.g-salv { width: 186px; }
.g-modify { width: 175px; }
.g-assem { width: 175px; }
.g-config { width: 122px; }
.g-const { width: 73px; }
.g-inspect { width: 74px; }
.g-insert { width: 121px; }
.g-select { width: 77px; border-right: 0; }
.rg-icons {
  height: 41px;
  display: flex;
  gap: 13px;
}
.g-create .rg-icons { margin-right: 3px; }
.g-salv .rg-icons { margin-left: 3px; }
.g-modify .rg-icons { margin-left: 2px; }
.ti {
  width: 41px;
  height: 41px;
}
.ti-select {
  width: 48px;
  height: 48px;
  margin-top: -3px;
}
.rg-label {
  margin-top: 6px;
  line-height: 18px;
  white-space: nowrap;
}
.g-create .rg-label { margin-right: 10px; }
.g-auto .rg-label { margin-right: 2px; }
.g-salv .rg-label { margin-left: 4px; }
.g-modify .rg-label { margin-right: 6px; }
.g-assem .rg-label { margin-right: 6px; }
.g-config .rg-label { margin-right: 4px; }
.g-const .rg-label { margin-left: 2px; }
.g-inspect .rg-label { margin-left: 2px; }
.g-insert .rg-label { margin-right: 2px; }

/* main area */
.main {
  flex: 1;
  display: flex;
  min-height: 0;
}
.rail {
  width: 9px;
  background: #e4e4e4;
  border-right: 1px solid #a8a8a8;
}
.workspace {
  flex: 1;
  position: relative;
  overflow: hidden;
  background: #fff;
}
.canvas {
  position: absolute;
  left: 0;
  top: 0;
  width: 100%;
  height: 100%;
}
.body path, .body circle {
  fill: #addcf5;
  fill-opacity: .2;
  stroke: #7fc8ea;
  stroke-width: 2;
}
.body .slot {
  fill: #fff;
  fill-opacity: 1;
}
.profile rect {
  fill: #f9a825;
  fill-opacity: .36;
}
.centerline path {
  fill: none;
  stroke: #cf7a3c;
  stroke-width: 1.5;
  stroke-dasharray: 26 3 6 3;
}
.axis-y path {
  fill: none;
  stroke: #27e000;
  stroke-width: 2.5;
  stroke-dasharray: 33 4 9 4;
}
.axis-x path {
  fill: none;
  stroke: #ff2a00;
  stroke-width: 2.5;
  stroke-dasharray: 33 4 9 4;
}
.pt circle {
  fill: #fff;
  stroke: #8a8a8a;
  stroke-width: 1.8;
}
.origin circle {
  fill: #fff;
  stroke: #858585;
  stroke-width: 2;
}
.halo {
  fill: #aaa;
  stroke: #bbb;
  stroke-width: 4;
}

/* browser panel */
.browser {
  position: absolute;
  left: 5px;
  top: 8px;
  width: 374px;
}
.panel-head, .comments {
  height: 30px;
  background: #f1f1f1;
  border: 1px solid #d6d6d6;
  border-bottom: 2px solid #cfcfcf;
  display: flex;
  align-items: center;
  color: #666;
  font-size: 14px;
}
.panel-title {
  margin-top: -2px;
}
.rewind {
  width: 29px;
  padding-left: 5px;
  font-size: 13px;
  letter-spacing: -3px;
  color: #333;
}
.round-btn {
  width: 11px;
  height: 11px;
  margin-left: auto;
  margin-right: 13px;
  border-radius: 50%;
  background: #333;
  color: #fff;
  font-size: 10px;
  line-height: 11px;
  text-align: center;
  font-weight: bold;
}
.tree {
  list-style: none;
  margin-top: 4px;
}
.row {
  height: 30px;
  display: flex;
  align-items: center;
}
.l0 { padding-left: 22px; }
.l1 { padding-left: 45px; }
.l2 { padding-left: 68px; }
.l3 { padding-left: 91px; }
.arrow {
  width: 23px;
  height: 12px;
  flex: none;
  position: relative;
}
.arrow::before {
  content: "";
  position: absolute;
  left: 1px;
  top: 0;
  width: 8px;
  height: 13px;
  background: #555;
  clip-path: polygon(0 0, 100% 50%, 0 100%);
}
.arrow::after {
  content: "";
  position: absolute;
  left: 2px;
  top: 2px;
  width: 5px;
  height: 9px;
  background: #fff;
  clip-path: polygon(0 0, 100% 50%, 0 100%);
}
.arrow.open::before {
  width: 9px;
  height: 9px;
  top: 2px;
  background: #222;
  clip-path: polygon(100% 0, 100% 100%, 0 100%);
}
.arrow.open::after {
  left: 5px;
  top: 5px;
  width: 4px;
  height: 5px;
  background: #888;
  clip-path: polygon(100% 0, 100% 100%, 0 100%);
}
.arrow.none::before, .arrow.none::after {
  display: none;
}
.pill {
  height: 25px;
  background: #f2f2f2;
  display: flex;
  align-items: center;
  padding: 0 11px 0 3px;
  white-space: nowrap;
}
.pill.wide { padding-right: 16px; }
.pill.mid { padding-right: 15px; }
.eye {
  width: 21px;
  height: 14px;
  margin-right: 10px;
  flex: none;
}
.ic {
  width: 21px;
  height: 20px;
  flex: none;
}
.gear {
  width: 18px;
  height: 18px;
  flex: none;
}
.label {
  margin-left: 16px;
  color: #444;
}
.label.tight {
  margin-left: 13px;
}
.pill.root {
  width: 170px;
  padding-right: 0;
}
.pill.root .eye { margin-right: 7px; }
.root-box {
  width: 107px;
  height: 24px;
  background: #999;
  display: flex;
  align-items: center;
}
.root-ico {
  width: 32px;
  height: 20px;
  flex: none;
  border-right: 1px solid #b5b5b5;
}
.root-name {
  color: #fff;
  font-weight: bold;
  margin-left: 9px;
}
.radio {
  width: 17px;
  height: 17px;
  margin-left: 6px;
  border-radius: 50%;
  border: 1px solid #777;
  background: radial-gradient(circle, #444 0 3.5px, #e4e4e4 4px);
}

.comments {
  position: absolute;
  left: 5px;
  bottom: 7px;
  width: 374px;
  padding-left: 30px;
}

/* view cube */
.viewcube {
  position: absolute;
  left: 1319px;
  top: 23px;
  width: 85px;
  height: 82px;
}
.vc-face {
  position: absolute;
  left: 11px;
  top: 17px;
  width: 53px;
  height: 53px;
  border: 1px solid #909090;
  background: rgba(238, 238, 238, .9);
  padding: 9px;
}
.vc-inner {
  display: block;
  width: 33px;
  height: 33px;
  background: #e2e3e5;
  color: #999;
  font-size: 24px;
  line-height: 33px;
  text-align: right;
  overflow: hidden;
}
.vc-y, .vc-x, .vc-z {
  position: absolute;
  font-size: 15px;
  line-height: 15px;
}
.vc-y { left: 12px; top: 1px; color: #8fe89a; }
.vc-x { left: 68px; top: 57px; color: #ff8a8a; }
.vc-z { left: 3px; top: 65px; color: #6a6aff; }

/* navigation bar */
.navbar {
  position: absolute;
  left: 563px;
  top: 748px;
  width: 296px;
  height: 30px;
  background: #f2f2f2;
  display: flex;
  align-items: center;
  padding-left: 4px;
}
.nav-group {
  display: flex;
  align-items: center;
  gap: 3px;
}
.nav-orbit { gap: 6px; }
.nav-fit { gap: 5px; margin-left: 12px; }
.nav-next { margin-left: 9px; }
.nav-cam { margin-left: 9px; }
.nav-hand { margin-left: 14px; }
.nav-zoom { margin-left: 12px; }
.nav-ico {
  width: 20px;
  height: 20px;
  flex: none;
}
.nav-caret {
  width: 7px;
  height: 5px;
  flex: none;
}

/* input method bar */
.ime {
  position: absolute;
  left: 1230px;
  top: 666px;
  width: 178px;
  height: 28px;
  background: #fff;
  border-bottom: 1px solid #e2e2e2;
  display: flex;
  align-items: center;
  gap: 6px;
  padding-left: 6px;
}
.ime-grip {
  width: 2px;
  height: 24px;
  border-left: 2px dotted #aaa;
  margin-right: 2px;
}
.ime-mode {
  width: 20px;
  height: 21px;
  border: 1px solid #777;
  background: #f4f4f4;
  color: #111;
  text-align: center;
  line-height: 19px;
  font-size: 15px;
  font-weight: bold;
}
.ime-faint {
  width: 20px;
  text-align: center;
  font-size: 16px;
  color: #bbb;
}
.ime-dots {
  width: 5px;
  height: 14px;
  background: linear-gradient(#5b9bd5 0 40%, #fff 40% 60%, #e08a3c 60%);
  border-radius: 3px;
  margin-left: 2px;
}

.badge {
  position: absolute;
  left: 1384px;
  top: 756px;
  width: 20px;
  height: 20px;
  border-radius: 50% 50% 0 50%;
  background: #000;
  display: flex;
  align-items: center;
  justify-content: center;
}
.badge svg {
  width: 13px;
  height: 9px;
}

/* timeline */
.timeline {
  height: 60px;
  flex: none;
  position: relative;
  display: flex;
  align-items: flex-start;
  background: #f0f0f0;
  border-left: 8px solid #e4e4e4;
  border-top: 1px solid #d8d8d8;
  padding-left: 14px;
  box-shadow: inset 1px 0 #a8a8a8;
}
.tl-controls {
  width: 170px;
  height: 58px;
  display: flex;
  align-items: center;
  gap: 15px;
}
.tl-btn {
  width: 15px;
  height: 16px;
  flex: none;
}
.tl-btn.prev { width: 17px; }
.tl-btn.play { width: 16px; height: 20px; }
.tl-track {
  position: relative;
  width: 240px;
  height: 58px;
}
.tl-features {
  display: flex;
  gap: 10px;
  padding-top: 20px;
}
.tl-f {
  width: 20px;
  height: 20px;
  flex: none;
}
.tl-bracket {
  position: absolute;
  left: 11px;
  top: 43px;
  width: 209px;
  height: 7px;
  border-bottom: 2px solid #ccc;
  display: flex;
  justify-content: space-between;
}
.tl-bracket span {
  width: 2px;
  height: 7px;
  background: #ccc;
}
.tl-marker {
  position: absolute;
  left: 227px;
  top: 11px;
  width: 16px;
  height: 40px;
}
.tl-gear {
  position: absolute;
  right: 5px;
  top: 20px;
  width: 19px;
  height: 19px;
}
```
